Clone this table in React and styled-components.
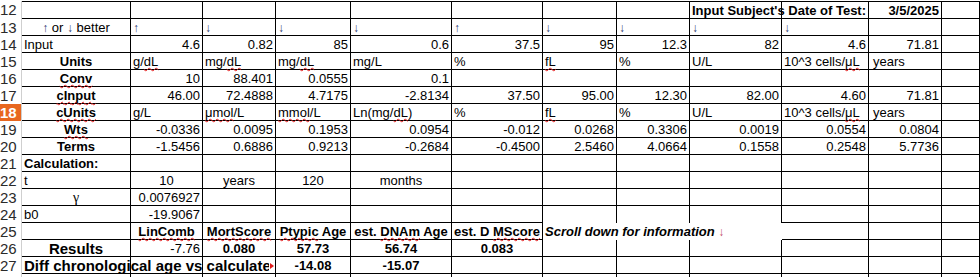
import React from 'react';
import styled, { createGlobalStyle } from 'styled-components';

const GlobalStyle = createGlobalStyle`
  html, body {
    margin: 0;
    padding: 0;
    background: #fff;
  }
  body {
    font-family: "Liberation Sans", Arial, sans-serif;
    overflow: hidden;
  }
`;

// column widths A..K, L takes the rest
const COLS = [109, 72, 73, 75, 101, 91, 74, 73, 92, 87, 73];

const Sheet = styled.div`
  display: grid;
  grid-template-columns: 22px ${COLS.map((c) => c + 'px').join(' ')} 1fr;
  grid-template-rows: 18px;
  grid-auto-rows: 17px;
  margin-top: 1px;
  width: 980px;
`;

const RowHead = styled.div`
  box-sizing: border-box;
  border-right: 1px solid #cfcfcf;
  background: ${(p) => (p.$active ? '#e8671f' : '#fff')};
  color: ${(p) => (p.$active ? '#fff' : '#2a2a2a')};
  font-weight: ${(p) => (p.$active ? 700 : 400)};
  font-size: 15px;
  line-height: 17px;
  text-align: right;
  padding-right: 9px;
  overflow: hidden;
  white-space: nowrap;
`;

const lineBg = (lines) =>
  lines
    ? `linear-gradient(to right, ${lines
        .map((x) => `transparent ${x}px, #000 ${x}px ${x + 1}px, transparent ${x + 1}px`)
        .join(', ')})`
    : 'none';

const Cell = styled.div`
  position: relative;
  box-sizing: border-box;
  grid-column: span ${(p) => p.$span || 1};
  border-right: ${(p) => (p.$noRight ? '0' : '1px solid #000')};
  border-bottom: ${(p) => (p.$noBottom ? '0' : '1px solid #000')};
  border-top: ${(p) => (p.$top ? '1px solid #000' : '0')};
  background-image: ${(p) => lineBg(p.$lines)};
  padding: 1px 2px 0 ${(p) => p.$pad || 2}px;
  font-size: ${(p) => p.$size || 13}px;
  line-height: 15px;
  font-weight: ${(p) => (p.$bold ? 700 : 400)};
  font-style: ${(p) => (p.$italic ? 'italic' : 'normal')};
  text-align: ${(p) => p.$align || 'left'};
  white-space: nowrap;
  color: #000;
`;

const Clip = styled.span`
  display: block;
  overflow: hidden;
  margin-right: 4px;
`;

const Cut = styled.span`
  position: absolute;
  right: 1px;
  top: 6px;
  border-left: 4px solid #e01b1b;
  border-top: 3px solid transparent;
  border-bottom: 3px solid transparent;
`;

const Sq = styled.span`
  text-decoration: underline wavy #e52222;
  text-decoration-skip-ink: none;
  text-decoration-thickness: 1px;
  text-underline-offset: 1px;
`;

const Arrow = styled.span`
  color: ${(p) => p.$color || '#2e3a70'};
  font-size: 12px;
  font-style: normal;
`;

const Greek = styled.span`
  font-family: "Liberation Serif", "DejaVu Serif", serif;
  font-size: 14px;
`;

const L = (v, o = {}) => ({ v, align: 'left', ...o });
const R = (v, o = {}) => ({ v, align: 'right', ...o });
const C = (v, o = {}) => ({ v, align: 'center', ...o });
const E = (o = {}) => ({ v: '', ...o });
const empties = (n, o) => Array.from({ length: n }, () => E(o));
const nums = (list) => list.map((v) => R(v));

const up = <Arrow>↑</Arrow>;
const down = <Arrow>↓</Arrow>;
const uL = <>10^3 cells/<Sq>μL</Sq></>;

const rows = [
  {
    n: 12,
    top: true,
    cells: [
      ...empties(8),
      R("Input Subject's Date of Test:", { bold: true, span: 2, lines: [91] }),
      R('3/5/2025', { bold: true }),
      E(),
    ],
  },
  {
    n: 13,
    cells: [
      C(<><Arrow>↑</Arrow> or <Arrow>↓</Arrow> better</>),
      L(up), L(down), L(down), L(down), L(up),
      L(down), L(down), L(down), L(down),
      E(), E(),
    ],
  },
  {
    n: 14,
    cells: [
      L('Input'),
      ...nums(['4.6', '0.82', '85', '0.6', '37.5', '95', '12.3', '82', '4.6', '71.81']),
      E(),
    ],
  },
  {
    n: 15,
    cells: [
      C('Units', { bold: true }),
      L(<>g/<Sq>dL</Sq></>),
      L(<>mg/<Sq>dL</Sq></>),
      L(<>mg/<Sq>dL</Sq></>),
      L('mg/L'),
      L('%'),
      L(<Sq>fL</Sq>),
      L('%'),
      L('U/L'),
      L(uL),
      L('years', { pad: 4 }),
      E(),
    ],
  },
  {
    n: 16,
    cells: [
      C(<Sq>Conv</Sq>, { bold: true }),
      ...nums(['10', '88.401', '0.0555', '0.1']),
      ...empties(7),
    ],
  },
  {
    n: 17,
    cells: [
      C(<Sq>cInput</Sq>, { bold: true }),
      ...nums(['46.00', '72.4888', '4.7175', '-2.8134', '37.50', '95.00', '12.30', '82.00', '4.60', '71.81']),
      E(),
    ],
  },
  {
    n: 18,
    active: true,
    cells: [
      C(<Sq>cUnits</Sq>, { bold: true }),
      L('g/L'),
      L(<><Sq>μmol</Sq>/L</>),
      L(<><Sq>mmol</Sq>/L</>),
      L(<>Ln(mg/<Sq>dL</Sq>)</>),
      L('%'),
      L(<Sq>fL</Sq>),
      L('%'),
      L('U/L'),
      L(uL),
      L('years', { pad: 4 }),
      E(),
    ],
  },
  {
    n: 19,
    cells: [
      C(<Sq>Wts</Sq>, { bold: true }),
      ...nums(['-0.0336', '0.0095', '0.1953', '0.0954', '-0.012', '0.0268', '0.3306', '0.0019', '0.0554', '0.0804']),
      E(),
    ],
  },
  {
    n: 20,
    cells: [
      C('Terms', { bold: true }),
      ...nums(['-1.5456', '0.6886', '0.9213', '-0.2684', '-0.4500', '2.5460', '4.0664', '0.1558', '0.2548', '5.7736']),
      E(),
    ],
  },
  { n: 21, cells: [L('Calculation:', { bold: true }), ...empties(11)] },
  {
    n: 22,
    cells: [L('t'), C('10'), C('years'), C('120'), C('months'), ...empties(7)],
  },
  { n: 23, cells: [C(<Greek>γ</Greek>), R('0.0076927'), ...empties(10)] },
  {
    n: 24,
    cells: [L('b0'), R('-19.9067'), ...empties(4), ...empties(3, { noBottom: true }), ...empties(3)],
  },
  {
    n: 25,
    cells: [
      E(),
      C(<Sq>LinComb</Sq>, { bold: true }),
      C(<Sq>MortScore</Sq>, { bold: true }),
      C(<><Sq>Ptypic</Sq> Age</>, { bold: true }),
      C(<>est. <Sq>DNAm</Sq> Age</>, { bold: true }),
      C(<>est. D <Sq>MScore</Sq></>, { bold: true }),
      L(<>Scroll down for information <Arrow $color="#c2506c">↓</Arrow></>, {
        bold: true, italic: true, span: 3, noRight: true, noBottom: true,
      }),
      ...empties(3),
    ],
  },
  {
    n: 26,
    cells: [
      C('Results', { bold: true, size: 15 }),
      R('-7.76'),
      C('0.080', { bold: true }),
      C('57.73', { bold: true }),
      C('56.74', { bold: true }),
      C('0.083', { bold: true }),
      ...empties(6),
    ],
  },
  {
    n: 27,
    cells: [
      L('Diff chronological age vs calculated', {
        bold: true, size: 15, span: 3, lines: [108, 180], clip: true,
      }),
      C('-14.08', { bold: true }),
      C('-15.07', { bold: true }),
      ...empties(7),
    ],
  },
  { n: '', cells: empties(12) },
];

const App = () => (
  <>
    <GlobalStyle />
    <Sheet>
      {rows.map((row, r) => (
        <React.Fragment key={r}>
          <RowHead $active={row.active}>{row.n}</RowHead>
          {row.cells.map((c, i) => (
            <Cell
              key={i}
              $align={c.align}
              $bold={c.bold}
              $italic={c.italic}
              $size={c.size}
              $span={c.span}
              $noRight={c.noRight}
              $noBottom={c.noBottom}
              $top={row.top}
              $lines={c.lines}
              $pad={c.pad}
            >
              {c.clip ? (
                <>
                  <Clip>{c.v}</Clip>
                  <Cut />
                </>
              ) : (
                c.v
              )}
            </Cell>
          ))}
        </React.Fragment>
      ))}
    </Sheet>
  </>
);

export default App;
